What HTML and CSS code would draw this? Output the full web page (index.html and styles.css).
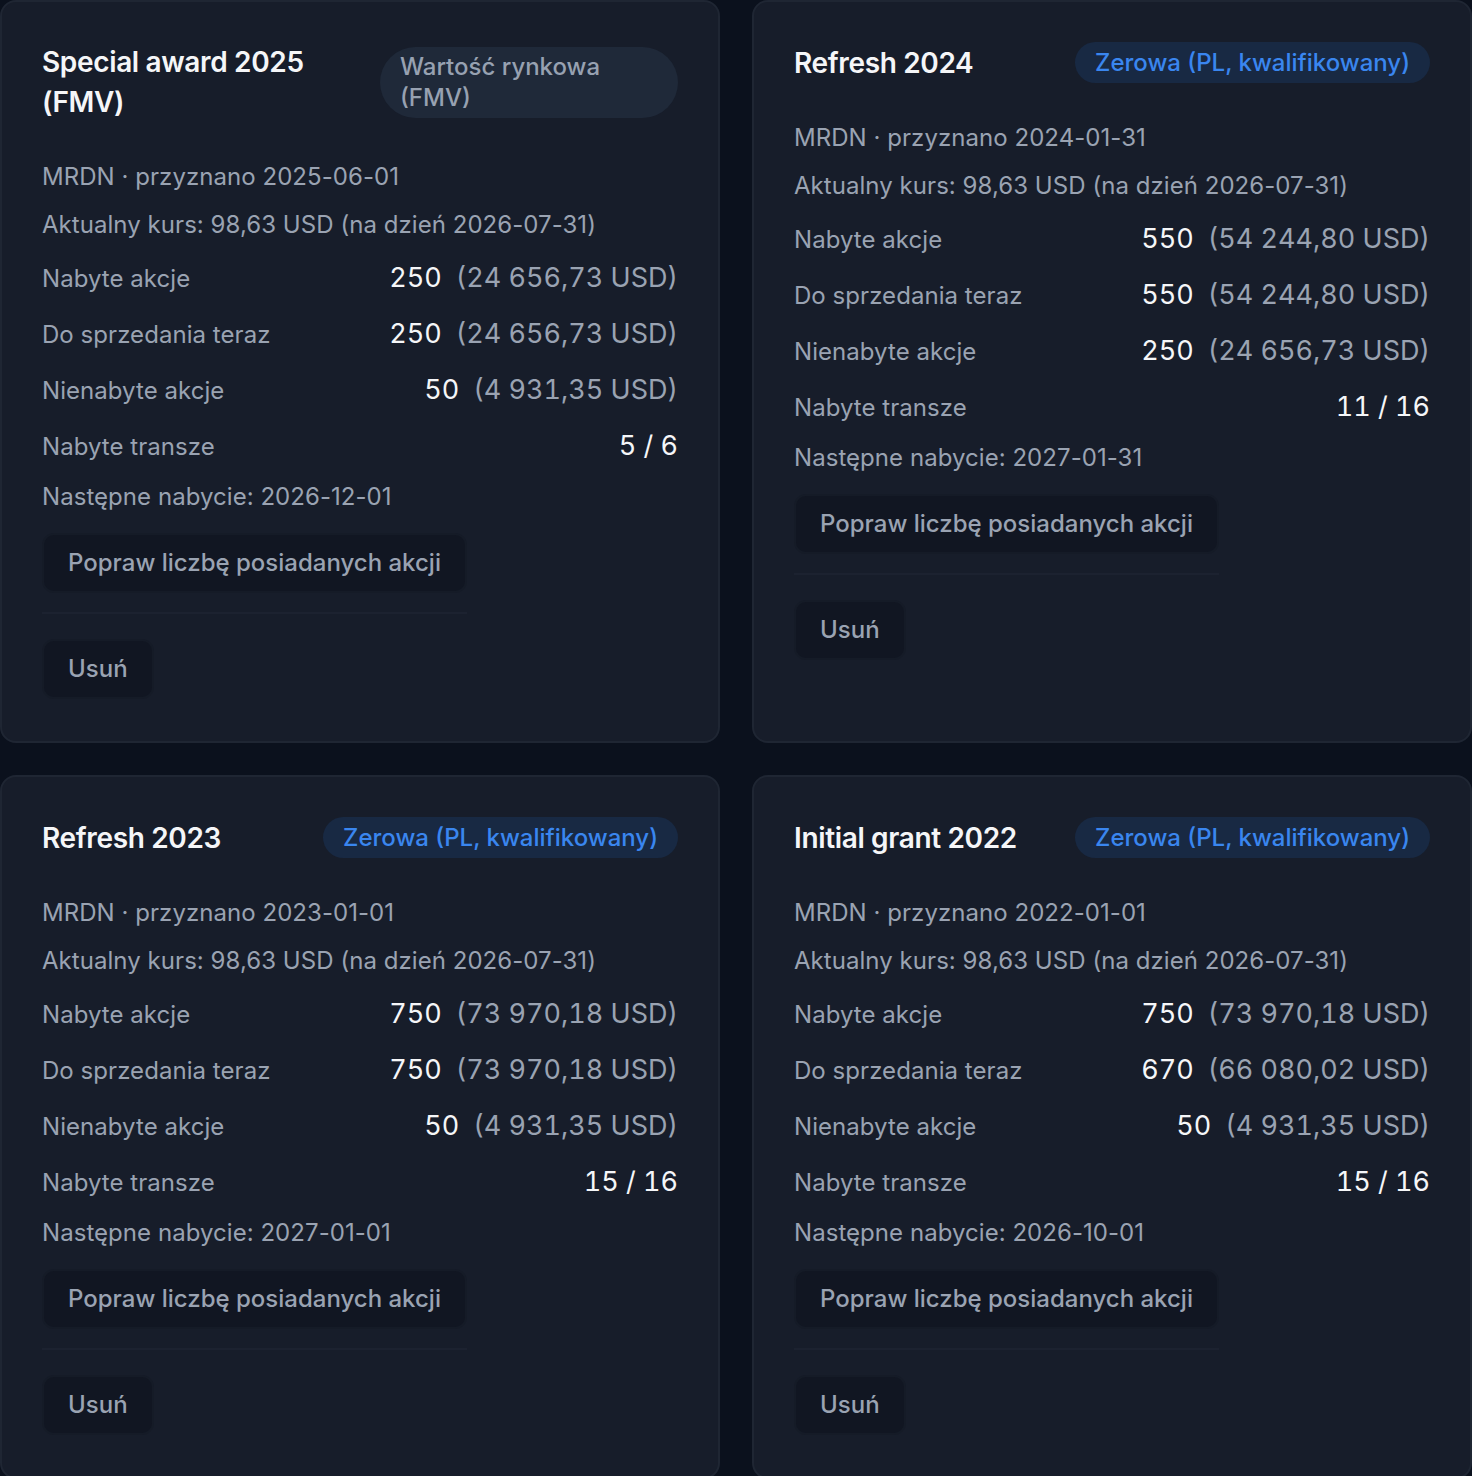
FILE: index.html
```html
<!DOCTYPE html>
<html lang="pl">
<head>
<meta charset="utf-8">
<title>Granty</title>
<link rel="stylesheet" href="styles.css">
</head>
<body>
<main class="grid">
  <section class="card">
    <header class="card-head">
      <h2 class="title">Special award 2025 (FMV)</h2>
      <span class="badge badge-fmv">Wartość rynkowa (FMV)</span>
    </header>
    <p class="meta">MRDN · przyznano 2025-06-01</p>
    <p class="meta">Aktualny kurs: 98,63 USD (na dzień 2026-07-31)</p>
    <div class="rows">
      <div class="row"><span class="label">Nabyte akcje</span><span class="val"><b>250</b><i>(24 656,73 USD)</i></span></div>
      <div class="row"><span class="label">Do sprzedania teraz</span><span class="val"><b>250</b><i>(24 656,73 USD)</i></span></div>
      <div class="row"><span class="label">Nienabyte akcje</span><span class="val"><b>50</b><i>(4 931,35 USD)</i></span></div>
      <div class="row"><span class="label">Nabyte transze</span><span class="val"><b>5 / 6</b></span></div>
    </div>
    <p class="meta next">Następne nabycie: 2026-12-01</p>
    <div class="actions">
      <button class="btn">Popraw liczbę posiadanych akcji</button>
      <div class="danger"><button class="btn">Usuń</button></div>
    </div>
  </section>

  <section class="card">
    <header class="card-head">
      <h2 class="title">Refresh 2024</h2>
      <span class="badge badge-zero">Zerowa (PL, kwalifikowany)</span>
    </header>
    <p class="meta">MRDN · przyznano 2024-01-31</p>
    <p class="meta">Aktualny kurs: 98,63 USD (na dzień 2026-07-31)</p>
    <div class="rows">
      <div class="row"><span class="label">Nabyte akcje</span><span class="val"><b>550</b><i>(54 244,80 USD)</i></span></div>
      <div class="row"><span class="label">Do sprzedania teraz</span><span class="val"><b>550</b><i>(54 244,80 USD)</i></span></div>
      <div class="row"><span class="label">Nienabyte akcje</span><span class="val"><b>250</b><i>(24 656,73 USD)</i></span></div>
      <div class="row"><span class="label">Nabyte transze</span><span class="val"><b>11 / 16</b></span></div>
    </div>
    <p class="meta next">Następne nabycie: 2027-01-31</p>
    <div class="actions">
      <button class="btn">Popraw liczbę posiadanych akcji</button>
      <div class="danger"><button class="btn">Usuń</button></div>
    </div>
  </section>

  <section class="card">
    <header class="card-head">
      <h2 class="title">Refresh 2023</h2>
      <span class="badge badge-zero">Zerowa (PL, kwalifikowany)</span>
    </header>
    <p class="meta">MRDN · przyznano 2023-01-01</p>
    <p class="meta">Aktualny kurs: 98,63 USD (na dzień 2026-07-31)</p>
    <div class="rows">
      <div class="row"><span class="label">Nabyte akcje</span><span class="val"><b>750</b><i>(73 970,18 USD)</i></span></div>
      <div class="row"><span class="label">Do sprzedania teraz</span><span class="val"><b>750</b><i>(73 970,18 USD)</i></span></div>
      <div class="row"><span class="label">Nienabyte akcje</span><span class="val"><b>50</b><i>(4 931,35 USD)</i></span></div>
      <div class="row"><span class="label">Nabyte transze</span><span class="val"><b>15 / 16</b></span></div>
    </div>
    <p class="meta next">Następne nabycie: 2027-01-01</p>
    <div class="actions">
      <button class="btn">Popraw liczbę posiadanych akcji</button>
      <div class="danger"><button class="btn">Usuń</button></div>
    </div>
  </section>

  <section class="card">
    <header class="card-head">
      <h2 class="title">Initial grant 2022</h2>
      <span class="badge badge-zero">Zerowa (PL, kwalifikowany)</span>
    </header>
    <p class="meta">MRDN · przyznano 2022-01-01</p>
    <p class="meta">Aktualny kurs: 98,63 USD (na dzień 2026-07-31)</p>
    <div class="rows">
      <div class="row"><span class="label">Nabyte akcje</span><span class="val"><b>750</b><i>(73 970,18 USD)</i></span></div>
      <div class="row"><span class="label">Do sprzedania teraz</span><span class="val"><b>670</b><i>(66 080,02 USD)</i></span></div>
      <div class="row"><span class="label">Nienabyte akcje</span><span class="val"><b>50</b><i>(4 931,35 USD)</i></span></div>
      <div class="row"><span class="label">Nabyte transze</span><span class="val"><b>15 / 16</b></span></div>
    </div>
    <p class="meta next">Następne nabycie: 2026-10-01</p>
    <div class="actions">
      <button class="btn">Popraw liczbę posiadanych akcji</button>
      <div class="danger"><button class="btn">Usuń</button></div>
    </div>
  </section>
</main>
</body>
</html>
```

FILE: styles.css
```css
* { box-sizing: border-box; }

html, body {
  margin: 0;
  padding: 0;
  background: #0b111d;
}

body {
  font-family: Inter, "Noto Sans", "Liberation Sans", sans-serif;
  color: #e5e7eb;
  width: 1472px;
  height: 1476px;
  overflow: hidden;
}

.grid {
  display: grid;
  grid-template-columns: 720px 720px;
  column-gap: 32px;
  row-gap: 32px;
}

.card {
  background: #171d2a;
  border: 2px solid #1f2633;
  border-radius: 16px;
  padding: 40px 40px 42px;
  display: flex;
  flex-direction: column;
}

.card-head {
  display: flex;
  align-items: center;
  justify-content: space-between;
  gap: 20px;
  margin-bottom: 39px;
}

.title {
  margin: 0;
  font-size: 28px;
  line-height: 40px;
  font-weight: 600;
  color: #f5f6f8;
  letter-spacing: -0.35px;
}

.badge {
  flex: 0 1 auto;
  border-radius: 999px;
  font-size: 24px;
  line-height: 31px;
  padding: 5px 20px;
  font-weight: 500;
}

.badge-fmv {
  flex-shrink: 0;
  max-width: 298px;
  background: #1f2939;
  color: #97a1b1;
  padding: 4px 20px 5px;
}

.badge-zero {
  background: #182943;
  color: #3a86ef;
  white-space: nowrap;
}

.meta {
  margin: 0;
  font-size: 24px;
  line-height: 32px;
  color: #9aa3b2;
  letter-spacing: 0.05px;
}

.meta + .meta { margin-top: 16px; }

.rows {
  margin-top: 17px;
  display: flex;
  flex-direction: column;
  gap: 16px;
}

.row {
  display: flex;
  justify-content: space-between;
  align-items: center;
  height: 40px;
}

.label {
  font-size: 24px;
  color: #9aa3b2;
  letter-spacing: 0.05px;
}

.val {
  display: flex;
  align-items: center;
  gap: 14px;
  font-size: 27px;
  line-height: 40px;
  font-variant-numeric: tabular-nums;
  font-feature-settings: "tnum";
}

.val b {
  font-weight: 400;
  color: #f5f6f8;
}

.val i {
  font-style: normal;
  color: #9aa3b2;
}

.meta.next { margin-top: 15px; }

.actions {
  margin-top: 20px;
  width: fit-content;
}

.btn {
  display: inline-block;
  font-family: inherit;
  font-size: 24px;
  font-weight: 500;
  line-height: 32px;
  color: #9aa3b2;
  background: #111622;
  border: 2px solid #151b27;
  border-radius: 12px;
  padding: 12px 24px;
  cursor: pointer;
}

.danger {
  margin-top: 19px;
  border-top: 2px solid #1c2230;
  padding-top: 25px;
}
```
